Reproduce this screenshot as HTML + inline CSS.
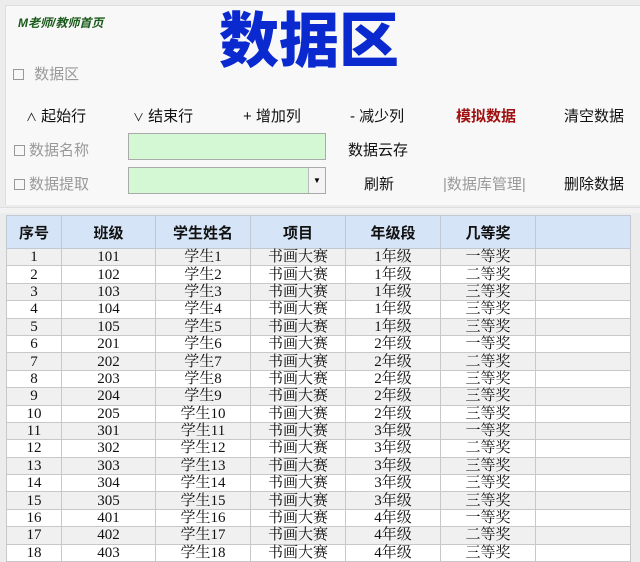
<!DOCTYPE html>
<html><head><meta charset="utf-8"><style>
*{margin:0;padding:0;box-sizing:border-box}
body{width:640px;height:561px;overflow:hidden;background:#ececec;font-family:"Liberation Sans","Noto Sans CJK SC",sans-serif;position:relative}
.panel{position:absolute;left:5px;top:5px;width:640px;height:200px;background:#f8f8f8;border-left:1px solid #ddd;border-top:1px solid #ddd}
.a{position:absolute;white-space:nowrap}
.g{color:#999;font-size:15px}
.k{color:#111;font-size:15px}
.cb{display:inline-block;width:11px;height:11px;border:1px solid #999;margin-right:6px;vertical-align:-1px}
.inp{position:absolute;background:#d4f7d4;border:1px solid #aaa}
table{position:absolute;left:6px;top:215px;border-collapse:collapse;font-family:"Liberation Serif","Noto Serif CJK SC",serif;font-size:15px;color:#111}
td{border:1px solid #c8c8c8;text-align:center;height:17.4px;line-height:16px;padding:0}
th{background:#d5e4f6;border:1px solid #c0c8d4;height:33px;font-family:"Liberation Sans","Noto Sans CJK SC",sans-serif;font-weight:bold;font-size:15px}
tr:nth-child(even) td{background:#f0f0f0}
tr:nth-child(odd) td{background:#fff}
</style></head><body>
<div class="panel"></div>
<div style="position:absolute;left:0;top:207px;width:640px;height:6px;background:#f2f2f2;border-top:1px solid #ddd"></div>
<div class="a" style="left:18px;top:14px;font-size:12px;font-style:italic;font-weight:bold;color:#1a5a1a">M老师/教师首页</div>
<div class="a" style="left:219px;top:10px;font-size:60px;font-weight:900;color:#0a2ad0;line-height:64px">数据区</div>
<div class="a g" style="left:13px;top:63px"><span class="cb"></span> 数据区</div>
<div class="a k" style="left:26px;top:105px"><span style="font-size:11px">∧</span> 起始行</div>
<div class="a k" style="left:133px;top:105px"><span style="font-size:11px">∨</span> 结束行</div>
<div class="a k" style="left:243px;top:105px">+ 增加列</div>
<div class="a k" style="left:350px;top:105px">- 减少列</div>
<div class="a" style="left:456px;top:105px;font-size:15px;font-weight:bold;color:#a01010">模拟数据</div>
<div class="a k" style="left:564px;top:105px">清空数据</div>
<div class="a g" style="left:14px;top:139px"><span class="cb" style="margin-right:4px"></span>数据名称</div>
<div class="inp" style="left:128px;top:133px;width:198px;height:27px"></div>
<div class="a k" style="left:348px;top:139px">数据云存</div>
<div class="a g" style="left:14px;top:173px"><span class="cb" style="margin-right:4px"></span>数据提取</div>
<div class="inp" style="left:128px;top:167px;width:198px;height:27px"><div style="position:absolute;right:0;top:0;width:17px;height:25px;background:#f4f4f4;border-left:1px solid #bbb;font-size:8px;text-align:center;line-height:25px">▼</div></div>
<div class="a k" style="left:364px;top:173px">刷新</div>
<div class="a g" style="left:443px;top:173px">|数据库管理|</div>
<div class="a k" style="left:564px;top:173px">删除数据</div>
<table>
<colgroup><col style="width:55px"><col style="width:94px"><col style="width:95px"><col style="width:95px"><col style="width:95px"><col style="width:95px"><col style="width:95px"></colgroup>
<tr><th>序号</th><th>班级</th><th>学生姓名</th><th>项目</th><th>年级段</th><th>几等奖</th><th></th></tr>
<tr><td>1</td><td>101</td><td>学生1</td><td>书画大赛</td><td>1年级</td><td>一等奖</td><td></td></tr>
<tr><td>2</td><td>102</td><td>学生2</td><td>书画大赛</td><td>1年级</td><td>二等奖</td><td></td></tr>
<tr><td>3</td><td>103</td><td>学生3</td><td>书画大赛</td><td>1年级</td><td>三等奖</td><td></td></tr>
<tr><td>4</td><td>104</td><td>学生4</td><td>书画大赛</td><td>1年级</td><td>三等奖</td><td></td></tr>
<tr><td>5</td><td>105</td><td>学生5</td><td>书画大赛</td><td>1年级</td><td>三等奖</td><td></td></tr>
<tr><td>6</td><td>201</td><td>学生6</td><td>书画大赛</td><td>2年级</td><td>一等奖</td><td></td></tr>
<tr><td>7</td><td>202</td><td>学生7</td><td>书画大赛</td><td>2年级</td><td>二等奖</td><td></td></tr>
<tr><td>8</td><td>203</td><td>学生8</td><td>书画大赛</td><td>2年级</td><td>三等奖</td><td></td></tr>
<tr><td>9</td><td>204</td><td>学生9</td><td>书画大赛</td><td>2年级</td><td>三等奖</td><td></td></tr>
<tr><td>10</td><td>205</td><td>学生10</td><td>书画大赛</td><td>2年级</td><td>三等奖</td><td></td></tr>
<tr><td>11</td><td>301</td><td>学生11</td><td>书画大赛</td><td>3年级</td><td>一等奖</td><td></td></tr>
<tr><td>12</td><td>302</td><td>学生12</td><td>书画大赛</td><td>3年级</td><td>二等奖</td><td></td></tr>
<tr><td>13</td><td>303</td><td>学生13</td><td>书画大赛</td><td>3年级</td><td>三等奖</td><td></td></tr>
<tr><td>14</td><td>304</td><td>学生14</td><td>书画大赛</td><td>3年级</td><td>三等奖</td><td></td></tr>
<tr><td>15</td><td>305</td><td>学生15</td><td>书画大赛</td><td>3年级</td><td>三等奖</td><td></td></tr>
<tr><td>16</td><td>401</td><td>学生16</td><td>书画大赛</td><td>4年级</td><td>一等奖</td><td></td></tr>
<tr><td>17</td><td>402</td><td>学生17</td><td>书画大赛</td><td>4年级</td><td>二等奖</td><td></td></tr>
<tr><td>18</td><td>403</td><td>学生18</td><td>书画大赛</td><td>4年级</td><td>三等奖</td><td></td></tr>
</table>
</body></html>
